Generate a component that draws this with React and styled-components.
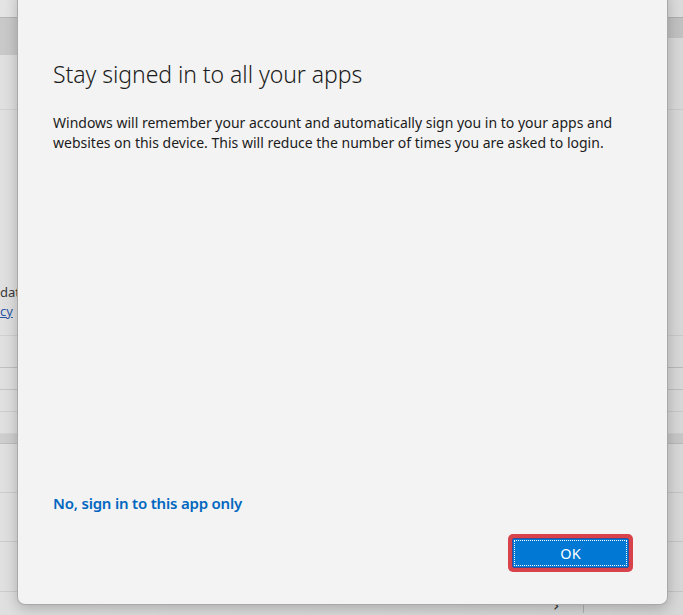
import React from 'react';
import styled, { createGlobalStyle } from 'styled-components';

const GlobalStyle = createGlobalStyle`
  html, body {
    margin: 0;
    padding: 0;
    height: 100%;
    overflow: hidden;
    background: #dedede;
    font-family: "Segoe UI", "Noto Sans", "Open Sans", sans-serif;
  }
`;

const Page = styled.div`
  position: relative;
  width: 683px;
  height: 615px;
  overflow: hidden;
  background: #e4e4e4;
`;

const TopStrip = styled.div`
  height: 17px;
  background: #e9e9e9;
  border-bottom: 1px solid #b9b9b9;
`;

const TitleBand = styled.div`
  height: 37px;
  display: flex;
  align-items: flex-start;
`;

const BandPart = styled.div`
  height: ${(p) => p.h}px;
  flex: ${(p) => (p.grow ? 1 : 'none')};
  width: ${(p) => (p.w ? `${p.w}px` : 'auto')};
  background: #cdcdcd;
`;

const Row = styled.div`
  height: ${(p) => p.h}px;
  box-sizing: content-box;
  border-bottom: 1px solid ${(p) => p.line || '#cfcfcf'};
  background: ${(p) => p.bg || 'transparent'};
  display: flex;
  flex-direction: column;
  justify-content: flex-end;
  padding-bottom: ${(p) => p.pb || 0}px;
`;

const FaintText = styled.span`
  font-family: "Noto Sans", sans-serif;
  font-size: 13px;
  line-height: 19px;
  color: ${(p) => (p.link ? '#2a5aa8' : '#3a3a3a')};
  text-decoration: ${(p) => (p.link ? 'underline' : 'none')};
  white-space: nowrap;
`;

const BottomRow = styled.div`
  display: flex;
  align-items: flex-end;
  height: 21px;
  padding-left: 553px;
  gap: 24px;
`;

const Chevron = styled.span`
  font-family: "DejaVu Sans", sans-serif;
  font-size: 16px;
  line-height: 14px;
  color: #333;
`;

const VLine = styled.div`
  width: 1px;
  height: 18px;
  background: #bdbdbd;
`;

const Backdrop = styled.div`
  position: absolute;
  inset: 0;
  background: linear-gradient(90deg, rgba(0,0,0,0.02), rgba(0,0,0,0.06));
`;

const Dialog = styled.div`
  position: absolute;
  left: 17px;
  top: -10px;
  width: 651px;
  height: 615px;
  box-sizing: border-box;
  background: #f3f3f3;
  border: 1px solid #a9a9a9;
  border-top: none;
  border-radius: 0 0 8px 8px;
  box-shadow: 0 4px 14px rgba(0, 0, 0, 0.22);
  display: flex;
  flex-direction: column;
  padding: 69px 34px 32px 35px;
`;

const Title = styled.h1`
  margin: 0;
  font-family: "Noto Sans", sans-serif;
  font-weight: 300;
  font-size: 23px;
  line-height: 31px;
  color: #1b1b1b;
  letter-spacing: -0.05px;
`;

const Body = styled.p`
  margin: 23px 0 0;
  font-family: "Noto Sans", sans-serif;
  font-size: 14px;
  line-height: 20px;
  color: #1b1b1b;
  letter-spacing: 0;
`;

const Spacer = styled.div`
  flex: 1;
`;

const AltLink = styled.a`
  font-family: "Noto Sans", sans-serif;
  font-weight: 600;
  font-size: 15px;
  line-height: 20px;
  color: #0067c0;
  text-decoration: none;
  cursor: pointer;
  letter-spacing: -0.2px;
`;

const Footer = styled.div`
  display: flex;
  justify-content: flex-end;
  margin-top: 21px;
`;

const FocusRing = styled.div`
  padding: 4px;
  border-radius: 5px;
  background: #d8434b;
`;

const PrimaryButton = styled.button`
  width: 117px;
  height: 30px;
  box-sizing: border-box;
  border: 1px solid #3a4a9a;
  border-radius: 2px;
  background: #0078d4;
  color: #fff;
  font-family: "Noto Sans", sans-serif;
  font-size: 14.5px;
  padding: 0;
  outline: 1px dotted #ffffff;
  outline-offset: -3px;
  cursor: pointer;
`;

const backRows = [
  { h: 54, line: '#d6d6d6' },
  {
    h: 211,
    pb: 14,
    line: '#d4d4d4',
    content: (
      <>
        <FaintText>dat</FaintText>
        <FaintText link>cy</FaintText>
      </>
    ),
  },
  { h: 31, line: '#c4c4c4' },
  { h: 21, line: '#c9c9c9' },
  { h: 21, line: '#d2d2d2' },
  { h: 21, line: '#d8d8d8' },
  { h: 9, line: '#c2c2c2', bg: '#d2d2d2' },
  { h: 48, line: '#d0d0d0' },
  { h: 48, line: '#d0d0d0' },
  { h: 49, line: '#d0d0d0' },
];

const App = () => (
  <>
    <GlobalStyle />
    <Page>
      <TopStrip />
      <TitleBand>
        <BandPart w={300} h={37} />
        <BandPart grow h={20} />
      </TitleBand>
      {backRows.map((r, i) => (
        <Row key={i} h={r.h} pb={r.pb} line={r.line} bg={r.bg}>
          {r.content}
        </Row>
      ))}
      <BottomRow>
        <Chevron>›</Chevron>
        <VLine />
      </BottomRow>
      <Backdrop />
      <Dialog role="dialog" aria-labelledby="stay-title">
        <Title id="stay-title">Stay signed in to all your apps</Title>
        <Body>
          Windows will remember your account and automatically sign you in to your apps and
          websites on this device. This will reduce the number of times you are asked to login.
        </Body>
        <Spacer />
        <AltLink>No, sign in to this app only</AltLink>
        <Footer>
          <FocusRing>
            <PrimaryButton>OK</PrimaryButton>
          </FocusRing>
        </Footer>
      </Dialog>
    </Page>
  </>
);

export default App;
